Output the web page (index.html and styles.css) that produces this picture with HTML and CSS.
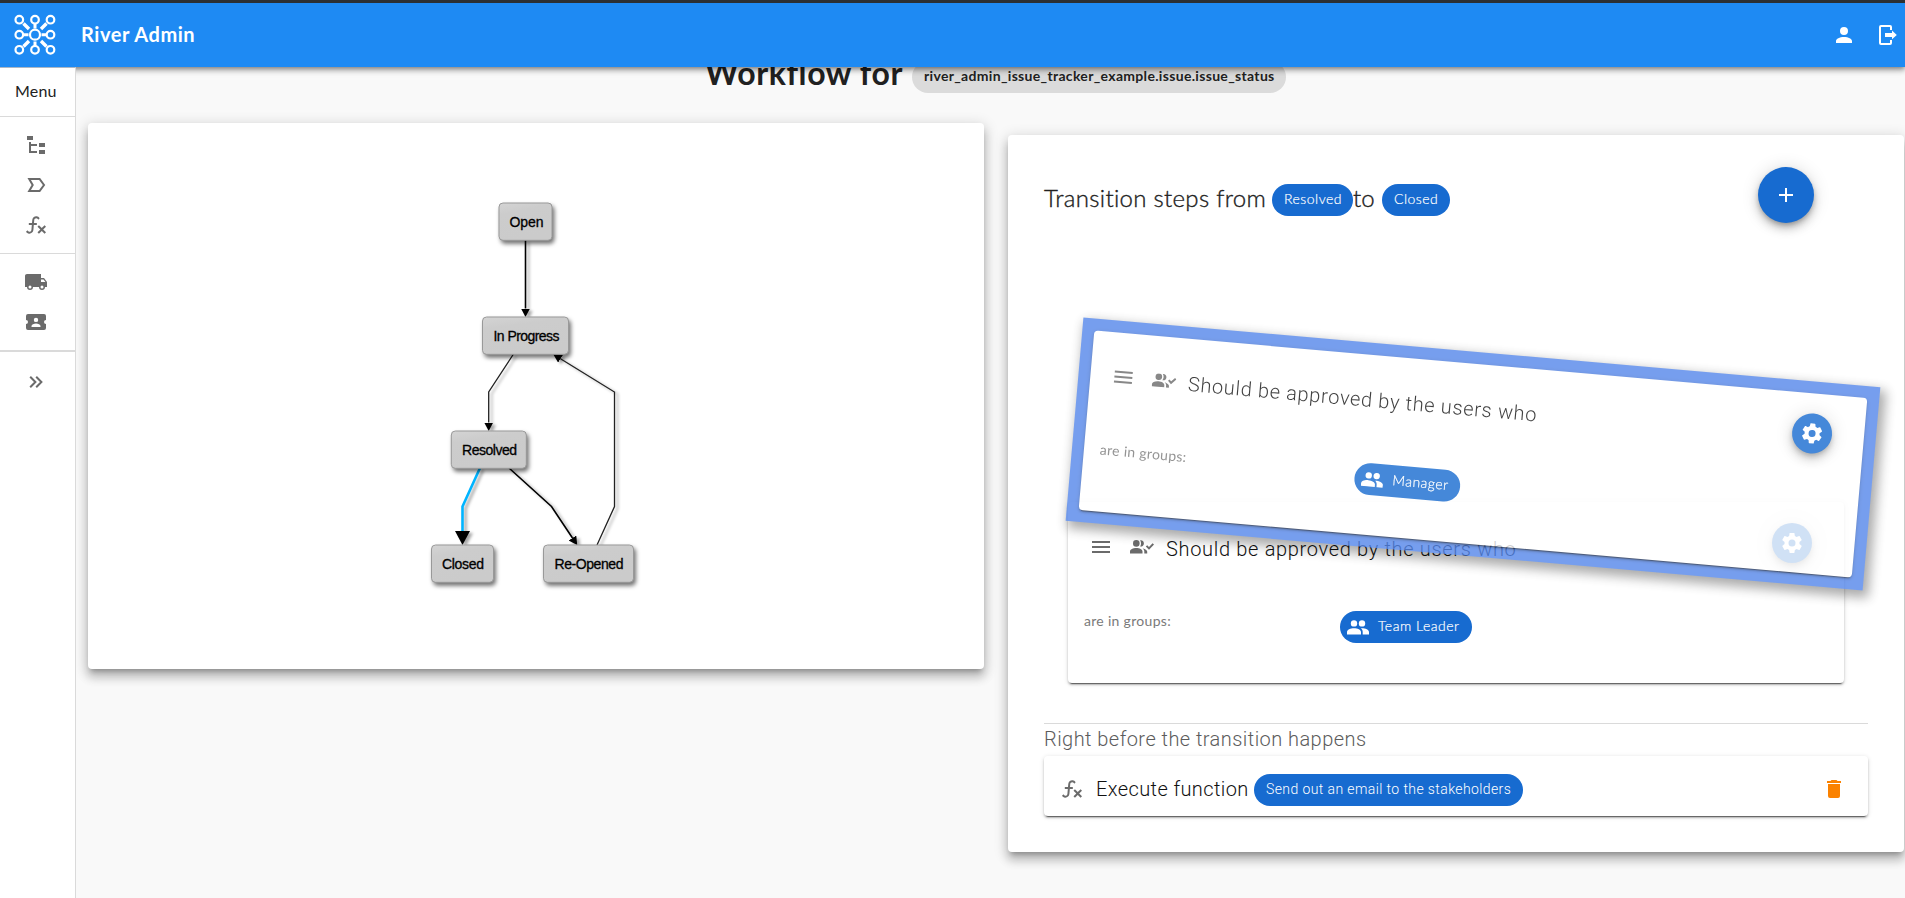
FILE: index.html
```html
<!DOCTYPE html>
<html lang="en">
<head>
<meta charset="utf-8">
<title>River Admin</title>
<link rel="stylesheet" href="styles.css">
</head>
<body>
<svg class="defs" width="0" height="0">
  <symbol id="fx" viewBox="0 0 24 24"><path d="M12.42,5.29C11.32,5.19 10.35,6 10.25,7.11L10,10H12.82V12H9.82L9.38,17.07C9.18,19.27 7.24,20.9 5.04,20.7C3.79,20.59 2.66,19.9 2,18.83L3.5,17.33C3.83,18.38 4.96,18.97 6,18.63C6.78,18.39 7.33,17.7 7.4,16.89L7.82,12H4.82V10H8L8.27,6.93C8.46,4.73 10.39,3.1 12.6,3.28C13.86,3.39 15,4.09 15.66,5.17L14.16,6.67C13.91,5.9 13.23,5.36 12.42,5.29M22,13.65L20.59,12.24L17.76,15.07L14.93,12.24L13.5,13.65L16.35,16.5L13.5,19.31L14.93,20.72L17.76,17.89L20.59,20.72L22,19.31L19.17,16.5L22,13.65Z"/></symbol>
  <symbol id="gear" viewBox="0 0 24 24"><path d="M12,15.5A3.5,3.5 0 0,1 8.5,12A3.5,3.5 0 0,1 12,8.5A3.5,3.5 0 0,1 15.5,12A3.5,3.5 0 0,1 12,15.5M19.43,12.97C19.47,12.65 19.5,12.33 19.5,12C19.5,11.67 19.47,11.34 19.43,11L21.54,9.37C21.73,9.22 21.78,8.95 21.66,8.73L19.66,5.27C19.54,5.05 19.27,4.96 19.05,5.05L16.56,6.05C16.04,5.66 15.5,5.32 14.87,5.07L14.5,2.42C14.46,2.18 14.25,2 14,2H10C9.75,2 9.54,2.18 9.5,2.42L9.13,5.07C8.5,5.32 7.96,5.66 7.44,6.05L4.95,5.05C4.73,4.96 4.46,5.05 4.34,5.27L2.34,8.73C2.21,8.95 2.27,9.22 2.46,9.37L4.57,11C4.53,11.34 4.5,11.67 4.5,12C4.5,12.33 4.53,12.65 4.57,12.97L2.46,14.63C2.27,14.78 2.21,15.05 2.34,15.27L4.34,18.73C4.46,18.95 4.73,19.03 4.95,18.95L7.44,17.94C7.96,18.34 8.5,18.68 9.13,18.93L9.5,21.58C9.54,21.82 9.75,22 10,22H14C14.25,22 14.46,21.82 14.5,21.58L14.87,18.93C15.5,18.67 16.04,18.34 16.56,17.94L19.05,18.95C19.27,19.03 19.54,18.95 19.66,18.73L21.66,15.27C21.78,15.05 21.73,14.78 21.54,14.63L19.43,12.97Z"/></symbol>
  <symbol id="groupchip" viewBox="0 0 22 15"><circle cx="7" cy="3.4" r="3.2"/><circle cx="15" cy="3.4" r="3.2"/><path d="M0 14.5V12C0 9.6 3.4 8.2 7 8.2S14 9.600 14 12V14.500ZM15.700 14.500V12C15.700 10.400 15 9.200 13.800 8.300C17.800 8 22 9.400 22 12V14.500Z"/></symbol>
  <symbol id="groupcheck" viewBox="0 0 24 14"><circle cx="6.300" cy="3.400" r="3.300"/><path d="M0 13.500V11.600C0 9.300 3 8 6.300 8S12.500 9.300 12.500 11.600V13.500ZM10.100 .300C11.800 -.200 13.900 1 13.900 3.400S11.800 7 10.100 6.500C11.400 4.600 11.400 2.200 10.100 .300ZM12.600 8.300C14 8.800 17.200 9.900 17.200 11.700V13.500H14.300V11.600C14.300 10.200 13.600 9.100 12.600 8.300Z"/><path d="M16.500 5.900L19 8.400L23.300 3.900" fill="none" stroke="currentColor" stroke-width="2"/></symbol>
  <symbol id="menu" viewBox="0 0 24 24"><path d="M3,6H21V8H3V6M3,11H21V13H3V11M3,16H21V18H3V16Z"/></symbol>
</svg>

<header class="appbar">
  <svg class="logo" viewBox="0 0 42 42">
    <g class="logo-lines">
      <path d="M9.500 9.500L15 15M32.500 9.500L27 15M9.500 32.500L15 27M32.500 32.500L27 27" stroke-width="3.400"/>
      <path d="M21 9V14.500M21 33V27.500M9 20.700H14.500M33 20.700H27.500" stroke-width="3"/>
    </g>
    <g class="logo-nodes">
      <circle cx="21" cy="20.700" r="5"/>
      <circle cx="5.300" cy="5.700" r="3.800"/><circle cx="21" cy="5.700" r="3.800"/><circle cx="36.500" cy="5.700" r="3.800"/>
      <circle cx="5.300" cy="20.700" r="3.800"/><circle cx="36.500" cy="20.700" r="3.800"/>
      <circle cx="5.300" cy="35.800" r="3.800"/><circle cx="21" cy="35.800" r="3.800"/><circle cx="36.500" cy="35.800" r="3.800"/>
    </g>
  </svg>
  <span class="brand">River Admin</span>
  <nav class="actions">
    <svg class="icon" viewBox="0 0 24 24"><path d="M12,4A4,4 0 0,1 16,8A4,4 0 0,1 12,12A4,4 0 0,1 8,8A4,4 0 0,1 12,4M12,14C16.420,14 20,15.790 20,18V20H4V18C4,15.790 7.580,14 12,14Z"/></svg>
    <svg class="icon" viewBox="0 0 24 24"><path d="M15 16.300V14H8V10H15V7.500L19.800 12L15 16.300ZM13 2A2 2 0 0 1 15 4V7H13V4H4V20H13V17H15V20A2 2 0 0 1 13 22H4A2 2 0 0 1 2 20V4A2 2 0 0 1 4 2Z"/></svg>
  </nav>
</header>

<div class="shell">
  <aside class="sidebar">
    <div class="menu-title">Menu</div>
    <div class="menu-group">
      <svg class="icon" viewBox="0 0 24 24"><path d="M3,3H9V7H3V3M15,10H21V14H15V10M15,17H21V21H15V17M13,13H7V18H13V20H7L5,20V9H7V11H13V13Z"/></svg>
      <svg class="icon" viewBox="0 0 24 24"><path d="M5.200 6H15.600L20 12L15.600 18H5.200L8.700 12Z" fill="none" stroke="currentColor" stroke-width="2"/></svg>
      <svg class="icon"><use href="#fx"/></svg>
    </div>
    <div class="menu-group second">
      <svg class="icon" viewBox="0 0 24 24"><path d="M18,18.500A1.500,1.500 0 0,1 16.500,17A1.500,1.500 0 0,1 18,15.500A1.500,1.500 0 0,1 19.500,17A1.500,1.500 0 0,1 18,18.500M19.500,9.500L21.460,12H17V9.500M6,18.500A1.500,1.500 0 0,1 4.500,17A1.500,1.500 0 0,1 6,15.500A1.500,1.500 0 0,1 7.500,17A1.500,1.500 0 0,1 6,18.500M20,8H17V4H3C1.890,4 1,4.890 1,6V17H3A3,3 0 0,0 6,20A3,3 0 0,0 9,17H15A3,3 0 0,0 18,20A3,3 0 0,0 21,17H23V12L20,8Z"/></svg>
      <svg class="icon" viewBox="0 0 24 24"><path fill-rule="evenodd" d="M4 4H20A2 2 0 0 1 22 6V10A2 2 0 0 0 22 14V18A2 2 0 0 1 20 20H4A2 2 0 0 1 2 18V14A2 2 0 0 0 2 10V6A2 2 0 0 1 4 4ZM12 7.700A2.200 2.200 0 1 0 12 12.100A2.200 2.200 0 0 0 12 7.700ZM7.500 17H16.500V16C16.500 14.500 14 13.600 12 13.600S7.500 14.500 7.500 16Z"/></svg>
    </div>
    <div class="menu-group last">
      <svg class="icon" viewBox="0 0 24 24"><path d="M6.200 6.800L11.400 12L6.200 17.200M12.200 6.800L17.400 12L12.200 17.200" fill="none" stroke="currentColor" stroke-width="2"/></svg>
    </div>
  </aside>

  <main class="content">
    <h1 class="page-title"><span class="title-text">Workflow for</span><span class="title-chip">river_admin_issue_tracker_example.issue.issue_status</span></h1>
    <div class="columns">
      <section class="card graph-card">
        <svg class="graph" width="896" height="545" viewBox="88 123 896 545">
          <defs>
            <marker id="arrow" markerUnits="userSpaceOnUse" markerWidth="9" markerHeight="9" refX="0" refY="4.500" orient="auto"><path d="M0 0L8.500 4.500L0 9Z"/></marker>
            <marker id="arrow-lg" markerUnits="userSpaceOnUse" markerWidth="15" markerHeight="15" refX="0" refY="7.500" orient="auto"><path d="M0 0L14 7.500L0 15Z"/></marker>
            <linearGradient id="nodefill" x1="0" y1="0" x2="0.300" y2="1"><stop offset="0" stop-color="#d4d4d4"/><stop offset=".3" stop-color="#cccccc"/><stop offset="1" stop-color="#cbcbcb"/></linearGradient>
          </defs>
          <g class="edges">
            <path class="strong" d="M525.500 240V308.500" marker-end="url(#arrow)"/>
            <path d="M513.500 354L488.700 392V422.500" marker-end="url(#arrow)"/>
            <path d="M597 545L614.500 506.500V392L560.500 358.800" marker-end="url(#arrow)"/>
            <path class="strong" d="M509 468L551.500 506.500L572.500 538" marker-end="url(#arrow)"/>
            <path class="active" d="M480 468L462.500 506.500V531" marker-end="url(#arrow-lg)"/>
          </g>
          <g class="nodes">
            <rect x="499" y="203" width="53" height="37.300" rx="4"/>
            <rect x="482.500" y="317" width="86" height="37.300" rx="4"/>
            <rect x="451.300" y="431" width="75" height="37.300" rx="4"/>
            <rect x="431.500" y="545" width="62" height="37.300" rx="4"/>
            <rect x="543.500" y="545" width="90" height="37.300" rx="4"/>
          </g>
          <g class="labels">
            <text x="509.500" y="227" textLength="34">Open</text>
            <text x="493.500" y="341" textLength="66">In Progress</text>
            <text x="462" y="455" textLength="55">Resolved</text>
            <text x="442" y="569" textLength="42">Closed</text>
            <text x="554.500" y="569" textLength="69">Re-Opened</text>
          </g>
        </svg>
      </section>

      <section class="card steps-card">
        <div class="steps-head">
          <div class="steps-title"><span class="from">Transition steps from</span><span class="chip c-resolved">Resolved</span><span class="to">to</span><span class="chip c-closed">Closed</span></div>
          <button class="fab"><svg class="icon" viewBox="0 0 24 24"><path d="M19,13H13V19H11V13H5V11H11V5H13V11H19V13Z"/></svg></button>
        </div>
        <div class="step">
          <div class="step-head">
            <svg class="icon drag"><use href="#menu"/></svg>
            <svg class="check"><use href="#groupcheck"/></svg>
            <span class="step-title">Should be approved by the users who</span>
            <button class="fab small"><svg class="icon"><use href="#gear"/></svg></button>
          </div>
          <div class="step-body">
            <span class="groups">are in groups:</span>
            <span class="chip group-chip leader"><svg class="people"><use href="#groupchip"/></svg><span>Team Leader</span></span>
          </div>
        </div>
        <div class="hooks">
          <div class="hooks-title">Right before the transition happens</div>
          <div class="hook">
            <svg class="icon"><use href="#fx"/></svg>
            <span class="hook-text">Execute function</span>
            <span class="chip c-hook">Send out an email to the stakeholders</span>
            <svg class="icon trash" viewBox="0 0 24 24"><path d="M19,4H15.500L14.500,3H9.500L8.500,4H5V6H19M6,19A2,2 0 0,0 8,21H16A2,2 0 0,0 18,19V7H6V19Z"/></svg>
          </div>
        </div>
        <div class="dragged">
          <div class="step">
            <div class="step-head">
              <svg class="icon drag"><use href="#menu"/></svg>
              <svg class="check"><use href="#groupcheck"/></svg>
              <span class="step-title">Should be approved by the users who</span>
              <button class="fab small"><svg class="icon"><use href="#gear"/></svg></button>
            </div>
            <div class="step-body">
              <span class="groups">are in groups:</span>
              <span class="chip group-chip manager"><svg class="people"><use href="#groupchip"/></svg><span>Manager</span></span>
            </div>
          </div>
        </div>
      </section>
    </div>
  </main>
</div>
</body>
</html>
```
FILE: styles.css
```css
* { box-sizing: border-box; }
body { margin: 0; width: 1905px; height: 898px; overflow: hidden; background: #f9f9f9; color: #212121; font-family: Lato, "Open Sans", sans-serif; }
.defs { position: absolute; }
.icon { width: 24px; height: 24px; fill: currentColor; flex: none; display: block; }
button { border: 0; padding: 0; color: #fff; }

.appbar { position: relative; z-index: 5; display: flex; align-items: center; height: 67px; border-top: 3px solid #2b2f33; background: #1e8af3; color: #fff; padding: 0 4px 0 13.500px; box-shadow: 0 2px 4px -1px rgba(0,0,0,.3), 0 4px 5px rgba(0,0,0,.2), 0 1px 10px rgba(0,0,0,.14); }
.logo { width: 42px; height: 42px; flex: none; }
.logo-lines { stroke: #fff; fill: none; }
.logo-nodes { stroke: #fff; stroke-width: 2.200; fill: #1e8af3; }
.brand { margin-left: 25.500px; padding-bottom: 2px; font-size: 20px; font-weight: 700; letter-spacing: .55px; line-height: 28px; }
.actions { display: flex; gap: 21px; margin-left: auto; }

.shell { display: flex; height: 831px; }
.sidebar { position: relative; z-index: 6; width: 76px; flex: none; background: #fff; border-right: 1px solid #dadada; border-top: 1px solid #aab6c4; color: #6b6b6b; }
.menu-title { height: 49px; padding: 0 0 1px 15px; line-height: 46px; font-size: 16px; letter-spacing: .2px; color: #212121; border-bottom: 1px solid #dadada; }
.menu-group { display: flex; flex-direction: column; align-items: center; gap: 16px; padding: 16px 3px 16px 0; height: 137px; border-bottom: 1px solid #dadada; }
.menu-group.second { height: 98px; border-bottom-width: 2px; }
.menu-group.last { padding-top: 18px; border: 0; }

.content { flex: 1; padding: 0 1px 0 12px; min-width: 0; }
.page-title { display: flex; height: 44px; margin: -18px 0 0 617px; align-items: center; font-size: 32px; font-weight: 700; }
.title-text { width: 207px; padding-top: 3px; white-space: nowrap; letter-spacing: .6px; }
.title-chip { height: 32px; line-height: 29px; border-radius: 16px; background: #dbdbdb; padding: 0 12px; font-size: 14px; width: 374px; letter-spacing: .32px; margin-top: 11px; white-space: nowrap; }
.columns { display: flex; gap: 24px; align-items: flex-start; padding-top: 30px; }
.card { width: 896px; background: #fff; border-radius: 4px; box-shadow: 0 5px 5px -3px rgba(0,0,0,.25), 0 8px 10px 1px rgba(0,0,0,.17), 0 3px 14px 2px rgba(0,0,0,.14); }
.graph-card { height: 546px; }
.graph { display: block; }
.edges path { fill: none; stroke: #222; stroke-width: 1.300; }
.edges .strong { stroke: #000; stroke-width: 1.600; }
marker path, .edges marker path { fill: #000; stroke: none; }
.edges { filter: drop-shadow(3px 2px 1.500px rgba(0,0,0,.35)); }
.edges .active { stroke: #00b4ff; stroke-width: 2.600; }
.nodes rect { fill: url(#nodefill); stroke: #999; stroke-width: 1; filter: drop-shadow(2px 3px 2px rgba(0,0,0,.55)); }
.labels text { font: 14px "Liberation Sans", Arial, sans-serif; fill: #000; stroke: #000; stroke-width: .3; }

.steps-card { position: relative; height: 717px; margin-top: 12px; padding: 32px 36px 36px; }
.steps-head { display: flex; align-items: center; height: 56px; padding-right: 54px; margin-bottom: 279px; }
.steps-title { display: flex; align-items: center; flex: 1; padding-top: 10px; font-size: 24px; font-weight: 300; white-space: nowrap; }
.from { width: 228px; letter-spacing: .3px; margin-top: -6px; -webkit-text-stroke: .35px #212121; }
.to { width: 29px; margin-top: -6px; -webkit-text-stroke: .35px #212121; }
.chip { display: inline-flex; flex: none; align-items: center; height: 32px; border-radius: 16px; background: #176bd0; color: #fff; padding: 0 0 3px 12px; font-size: 14px; font-weight: 300; letter-spacing: .5px; white-space: nowrap; -webkit-text-stroke: .2px #fff; }
.c-resolved { width: 81px; }
.c-closed { width: 68px; }
.fab { display: flex; align-items: center; justify-content: center; width: 56px; height: 56px; border-radius: 50%; background: #176bd0; box-shadow: 0 3px 5px -1px rgba(0,0,0,.25), 0 6px 10px rgba(0,0,0,.18), 0 1px 18px rgba(0,0,0,.14); }
.fab.small { width: 40px; height: 40px; margin-left: auto; }

.step { width: 776px; height: 181px; border-radius: 4px; background: #fff; box-shadow: 0 3px 1px -2px rgba(0,0,0,.5), 0 2px 2px rgba(0,0,0,.2), 0 1px 5px rgba(0,0,0,.14); }
.steps-card > .step { margin-left: 24px; }
.step-head { display: flex; align-items: center; padding: 21px 32px 0 21px; color: #6b6b6b; }
.drag { margin-top: 8px; }
.check { width: 24px; height: 14px; margin: 8px 12px 0 17px; fill: currentColor; }
.step-title { font: 300 20px/24px Roboto, "Liberation Sans", sans-serif; letter-spacing: .68px; color: #111; margin-top: 11px; }
.step-body { display: flex; align-items: center; margin-top: 48px; padding-left: 16px; }
.groups { width: 256px; font-size: 14px; letter-spacing: .3px; color: #7a7a7a; margin-top: -13px; }
.group-chip { padding-left: 7px; }
.people { width: 22px; height: 15px; fill: #fff; margin: 3px 9px 0 0; }
.leader { width: 132px; }
.manager { width: 106px; }

.dragged { position: absolute; left: 65px; top: 217px; width: 800px; height: 204px; padding: 12px; background: #5587ea; opacity: .8; transform: rotate(5deg); box-shadow: 4px 5px 12px 2px rgba(0,0,0,.42); }
.dragged .step { height: 180px; }
.dragged .step-head { padding-top: 20px; }
.dragged .step-title { margin-top: 10px; }

.hooks { margin-top: 40px; border-top: 1px solid #dadada; }
.hooks-title { height: 32px; font: 300 20px/30px Roboto, "Liberation Sans", sans-serif; letter-spacing: .45px; color: #5c5c5c; }
.hook { display: flex; align-items: center; height: 60px; padding: 7px 22px 0 16px; border-radius: 4px; color: #6b6b6b; box-shadow: 0 3px 1px -2px rgba(0,0,0,.5), 0 2px 2px rgba(0,0,0,.2), 0 1px 5px rgba(0,0,0,.14); }
.hook .icon { margin-top: -1px; }
.hook .icon.trash { margin-left: auto; color: #fb8200; }
.hook-text { width: 158px; margin: -2px 0 0 12px; font: 300 20px/24px Roboto, "Liberation Sans", sans-serif; letter-spacing: .4px; color: #111; white-space: nowrap; }
.c-hook { width: 269px; padding-bottom: 1px; font-family: Roboto, "Liberation Sans", sans-serif; letter-spacing: .4px; -webkit-text-stroke: 0; }
```
